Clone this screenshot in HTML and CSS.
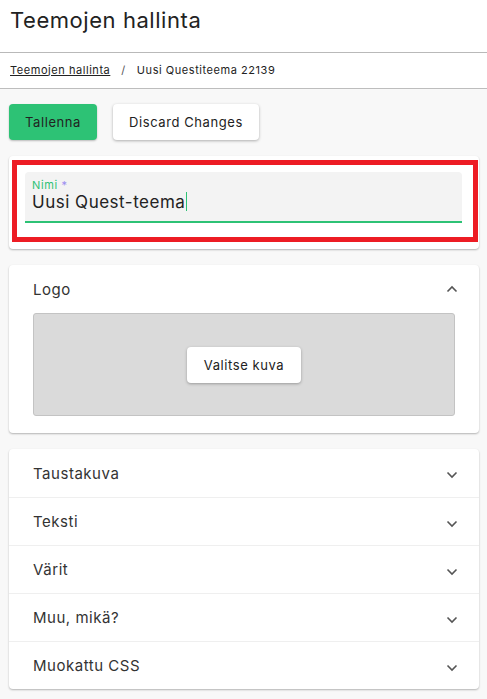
FILE: index.html
```html
<!DOCTYPE html>
<html lang="fi">
<head>
<meta charset="utf-8">
<title>Teemojen hallinta</title>
<link rel="stylesheet" href="styles.css">
</head>
<body>
<header class="page-header">
  <h1 class="page-title">Teemojen hallinta</h1>
</header>
<nav class="breadcrumb">
  <a class="crumb-link" href="#">Teemojen hallinta</a>
  <span class="crumb-sep">/</span>
  <span class="crumb-current">Uusi Questiteema 22139</span>
</nav>
<main class="content">
  <div class="actions">
    <button class="btn btn-primary">Tallenna</button>
    <button class="btn btn-plain">Discard Changes</button>
  </div>

  <section class="card name-card">
    <div class="highlight">
      <div class="field">
        <label class="field-label">Nimi <span class="req">*</span></label>
        <div class="field-value">Uusi Quest-teema<span class="caret"></span></div>
      </div>
    </div>
  </section>

  <section class="card logo-card">
    <div class="panel-head">
      <span class="panel-title">Logo</span>
      <svg class="chev" viewBox="0 0 12 8" width="12" height="8"><polyline points="1.5,6.5 6,2 10.5,6.5" fill="none" stroke="#555" stroke-width="1.6"/></svg>
    </div>
    <div class="dropzone">
      <button class="btn btn-plain btn-small">Valitse kuva</button>
    </div>
  </section>

  <section class="card list-card">
    <div class="row"><span class="panel-title">Taustakuva</span><svg class="chev" viewBox="0 0 12 8" width="12" height="8"><polyline points="1.5,1.5 6,6 10.5,1.5" fill="none" stroke="#555" stroke-width="1.6"/></svg></div>
    <div class="row"><span class="panel-title">Teksti</span><svg class="chev" viewBox="0 0 12 8" width="12" height="8"><polyline points="1.5,1.5 6,6 10.5,1.5" fill="none" stroke="#555" stroke-width="1.6"/></svg></div>
    <div class="row"><span class="panel-title">Värit</span><svg class="chev" viewBox="0 0 12 8" width="12" height="8"><polyline points="1.5,1.5 6,6 10.5,1.5" fill="none" stroke="#555" stroke-width="1.6"/></svg></div>
    <div class="row"><span class="panel-title">Muu, mikä?</span><svg class="chev" viewBox="0 0 12 8" width="12" height="8"><polyline points="1.5,1.5 6,6 10.5,1.5" fill="none" stroke="#555" stroke-width="1.6"/></svg></div>
    <div class="row"><span class="panel-title">Muokattu CSS</span><svg class="chev" viewBox="0 0 12 8" width="12" height="8"><polyline points="1.5,1.5 6,6 10.5,1.5" fill="none" stroke="#555" stroke-width="1.6"/></svg></div>
  </section>
</main>
</body>
</html>
```
FILE: styles.css
```css
* { box-sizing: border-box; }
html, body { margin: 0; padding: 0; }
body {
  background: #f8f8f8;
  font-family: Inter, "Noto Sans", sans-serif;
  color: #222;
  letter-spacing: 0.04em;
}
.page-header {
  background: #fff;
  height: 53px;
  border-bottom: 1px solid #b9b9b9;
  padding: 5px 10px 0;
}
.page-title {
  margin: 0;
  font-size: 22px;
  font-weight: 400;
  line-height: 30px;
  color: #222;
  letter-spacing: 0.025em;
}
.breadcrumb {
  background: #fff;
  height: 36px;
  border-bottom: 1px solid #bdbdbd;
  display: flex;
  align-items: center;
  padding: 0 10px 2px;
  font-size: 11px;
  letter-spacing: 0.05em;
  color: #222;
}
.crumb-link { color: #222; text-decoration: underline; }
.crumb-sep { margin: 0 11px; color: #555; }
.content {
  padding: 15px 8px 10px 9px;
}
.actions { display: flex; gap: 16px; }
.btn {
  font-family: inherit;
  letter-spacing: 0.045em;
  font-size: 13px;
  height: 36px;
  border: none;
  border-radius: 4px;
  cursor: pointer;
  color: #222;
}
.btn-primary {
  background: #2dc275;
  width: 88px;
  box-shadow: 0 1px 2px rgba(0,0,0,0.25);
}
.btn-plain {
  background: #fff;
  width: 146px;
  box-shadow: 0 1px 3px rgba(0,0,0,0.3);
}
.btn-small { width: 114px; font-size: 13px; }
.card {
  background: #fff;
  border-radius: 4px;
  box-shadow: 0 1px 2px rgba(0,0,0,0.28);
  margin-top: 16px;
}
.name-card { padding: 4px 1px 7px 3px; }
.highlight {
  border: 5px solid #ed1c24;
  padding: 7px 11px 14px 8px;
}
.field {
  background: #f3f3f3;
  border-radius: 4px 4px 0 0;
  border-bottom: 2px solid #2dc275;
  height: 51px;
  padding: 7px 7px 0;
}
.field-label {
  display: block;
  font-size: 11px;
  line-height: 13px;
  color: #2dc275;
}
.req { color: #9a8cf0; }
.field-value {
  font-size: 17px;
  line-height: 21px;
  color: #222;
  letter-spacing: 0.03em;
}
.caret {
  display: inline-block;
  width: 1px;
  height: 19px;
  background: #2dc275;
  vertical-align: -3px;
  margin-left: 1px;
}
.logo-card { padding: 0 24px 17px; }
.panel-head {
  height: 48px;
  display: flex;
  align-items: center;
  justify-content: space-between;
}
.panel-title { font-size: 15px; color: #333; letter-spacing: 0.035em; }
.chev { margin-right: -3px; }
.dropzone {
  height: 103px;
  background: #dadada;
  border: 1px solid #c3c3c3;
  border-radius: 3px;
  display: flex;
  align-items: center;
  justify-content: center;
}
.list-card { margin-top: 16px; }
.row {
  height: 48px;
  display: flex;
  align-items: center;
  justify-content: space-between;
  padding: 0 24px;
  border-top: 1px solid #efefef;
}
.row:first-child { border-top: none; }
.row .chev { margin-top: 4px; }
```
